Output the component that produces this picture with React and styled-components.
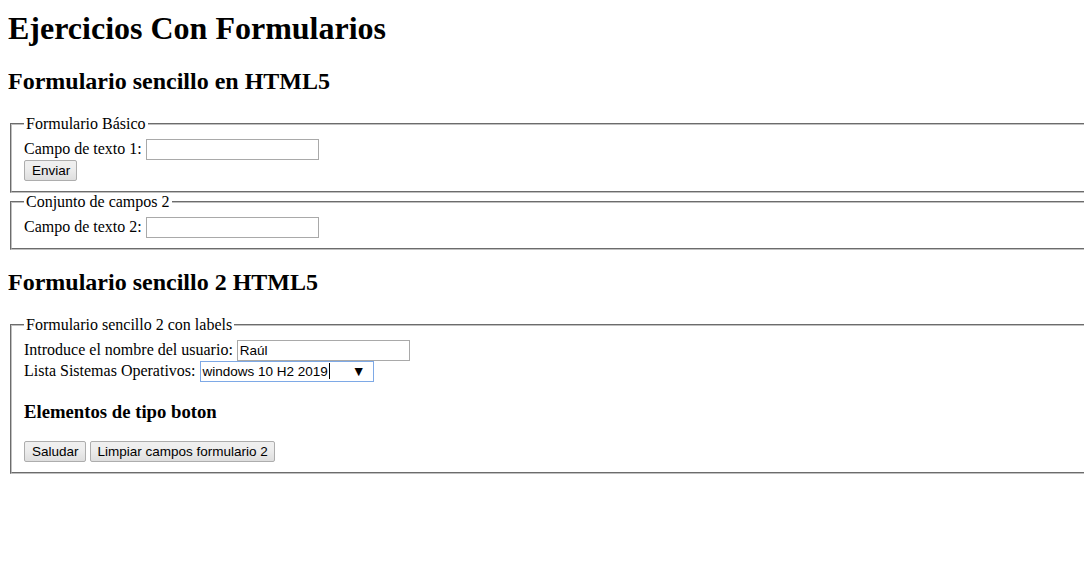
import styled, { createGlobalStyle } from 'styled-components';

const GlobalStyle = createGlobalStyle`
  html {
    overflow: hidden;
  }
  body {
    margin: 0 0 8px 8px;
    font-family: "Liberation Serif", "Times New Roman", serif;
    font-size: 16px;
    color: #000;
    background: #fff;
  }
`;

const Title = styled.h1`
  font-size: 32px;
  font-weight: bold;
  margin: 0 0 21.44px;
  padding-top: 10px;
`;

const SectionTitle = styled.h2`
  font-size: 24px;
  font-weight: bold;
  margin: 19.92px 0;
`;

const SubTitle = styled.h3`
  font-size: 18.72px;
  font-weight: bold;
  margin: 18.72px 0;
`;

const FieldSet = styled.fieldset`
  width: 1100px;
  margin: 0 2px;
  padding: 5.6px 12px 10px;
  border: 2px groove #c0c0c0;
`;

const Legend = styled.legend`
  padding: 0 2px;
`;

const Row = styled.div`
  display: flex;
  align-items: baseline;
  gap: 4px;
`;

const TextInput = styled.input`
  box-sizing: border-box;
  width: 173px;
  height: 21px;
  margin: 0;
  padding: 1px 2px;
  border: 1px solid #a9a9a9;
  font-family: "Liberation Sans", Arial, sans-serif;
  font-size: 13.5px;
  color: #000;
  outline: none;
`;

const Combo = styled.div`
  box-sizing: border-box;
  width: 174px;
  height: 21px;
  padding: 1px 7px 1px 2px;
  border: 1px solid #7ea9e6;
  display: flex;
  align-items: center;
  font-family: "Liberation Sans", Arial, sans-serif;
  font-size: 13.5px;
`;

const Caret = styled.span`
  display: inline-block;
  width: 1px;
  height: 16px;
  background: #000;
  margin-left: 1px;
`;

const Arrow = styled.span`
  margin-left: auto;
  font-size: 14px;
  line-height: 1;
`;

const Button = styled.button`
  box-sizing: border-box;
  height: 21px;
  margin: 0;
  padding: 1px 6px 1px 7px;
  border: 1px solid #adadad;
  border-radius: 2px;
  background: linear-gradient(#f0f0f0, #ededed 40%, #dedede);
  font-family: "Liberation Sans", Arial, sans-serif;
  font-size: 13.5px;
  color: #000;
`;

export default function App() {
  return (
    <>
      <GlobalStyle />
      <Title>Ejercicios Con Formularios</Title>
      <SectionTitle>Formulario sencillo en HTML5</SectionTitle>
      <FieldSet>
        <Legend>Formulario Básico</Legend>
        <Row>
          <label htmlFor="campo1">Campo de texto 1:</label>
          <TextInput id="campo1" type="text" />
        </Row>
        <Row>
          <Button type="submit">Enviar</Button>
        </Row>
      </FieldSet>
      <FieldSet>
        <Legend>Conjunto de campos 2</Legend>
        <Row>
          <label htmlFor="campo2">Campo de texto 2:</label>
          <TextInput id="campo2" type="text" />
        </Row>
      </FieldSet>

      <SectionTitle>Formulario sencillo 2 HTML5</SectionTitle>
      <FieldSet>
        <Legend>Formulario sencillo 2 con labels</Legend>
        <Row>
          <label htmlFor="usuario">Introduce el nombre del usuario:</label>
          <TextInput id="usuario" type="text" defaultValue="Raúl" />
        </Row>
        <Row>
          <label>Lista Sistemas Operativos:</label>
          <Combo>
            <span>windows 10 H2 2019</span>
            <Caret />
            <Arrow>▼</Arrow>
          </Combo>
        </Row>
        <SubTitle>Elementos de tipo boton</SubTitle>
        <Row>
          <Button type="button">Saludar</Button>
          <Button type="reset">Limpiar campos formulario 2</Button>
        </Row>
      </FieldSet>
    </>
  );
}
